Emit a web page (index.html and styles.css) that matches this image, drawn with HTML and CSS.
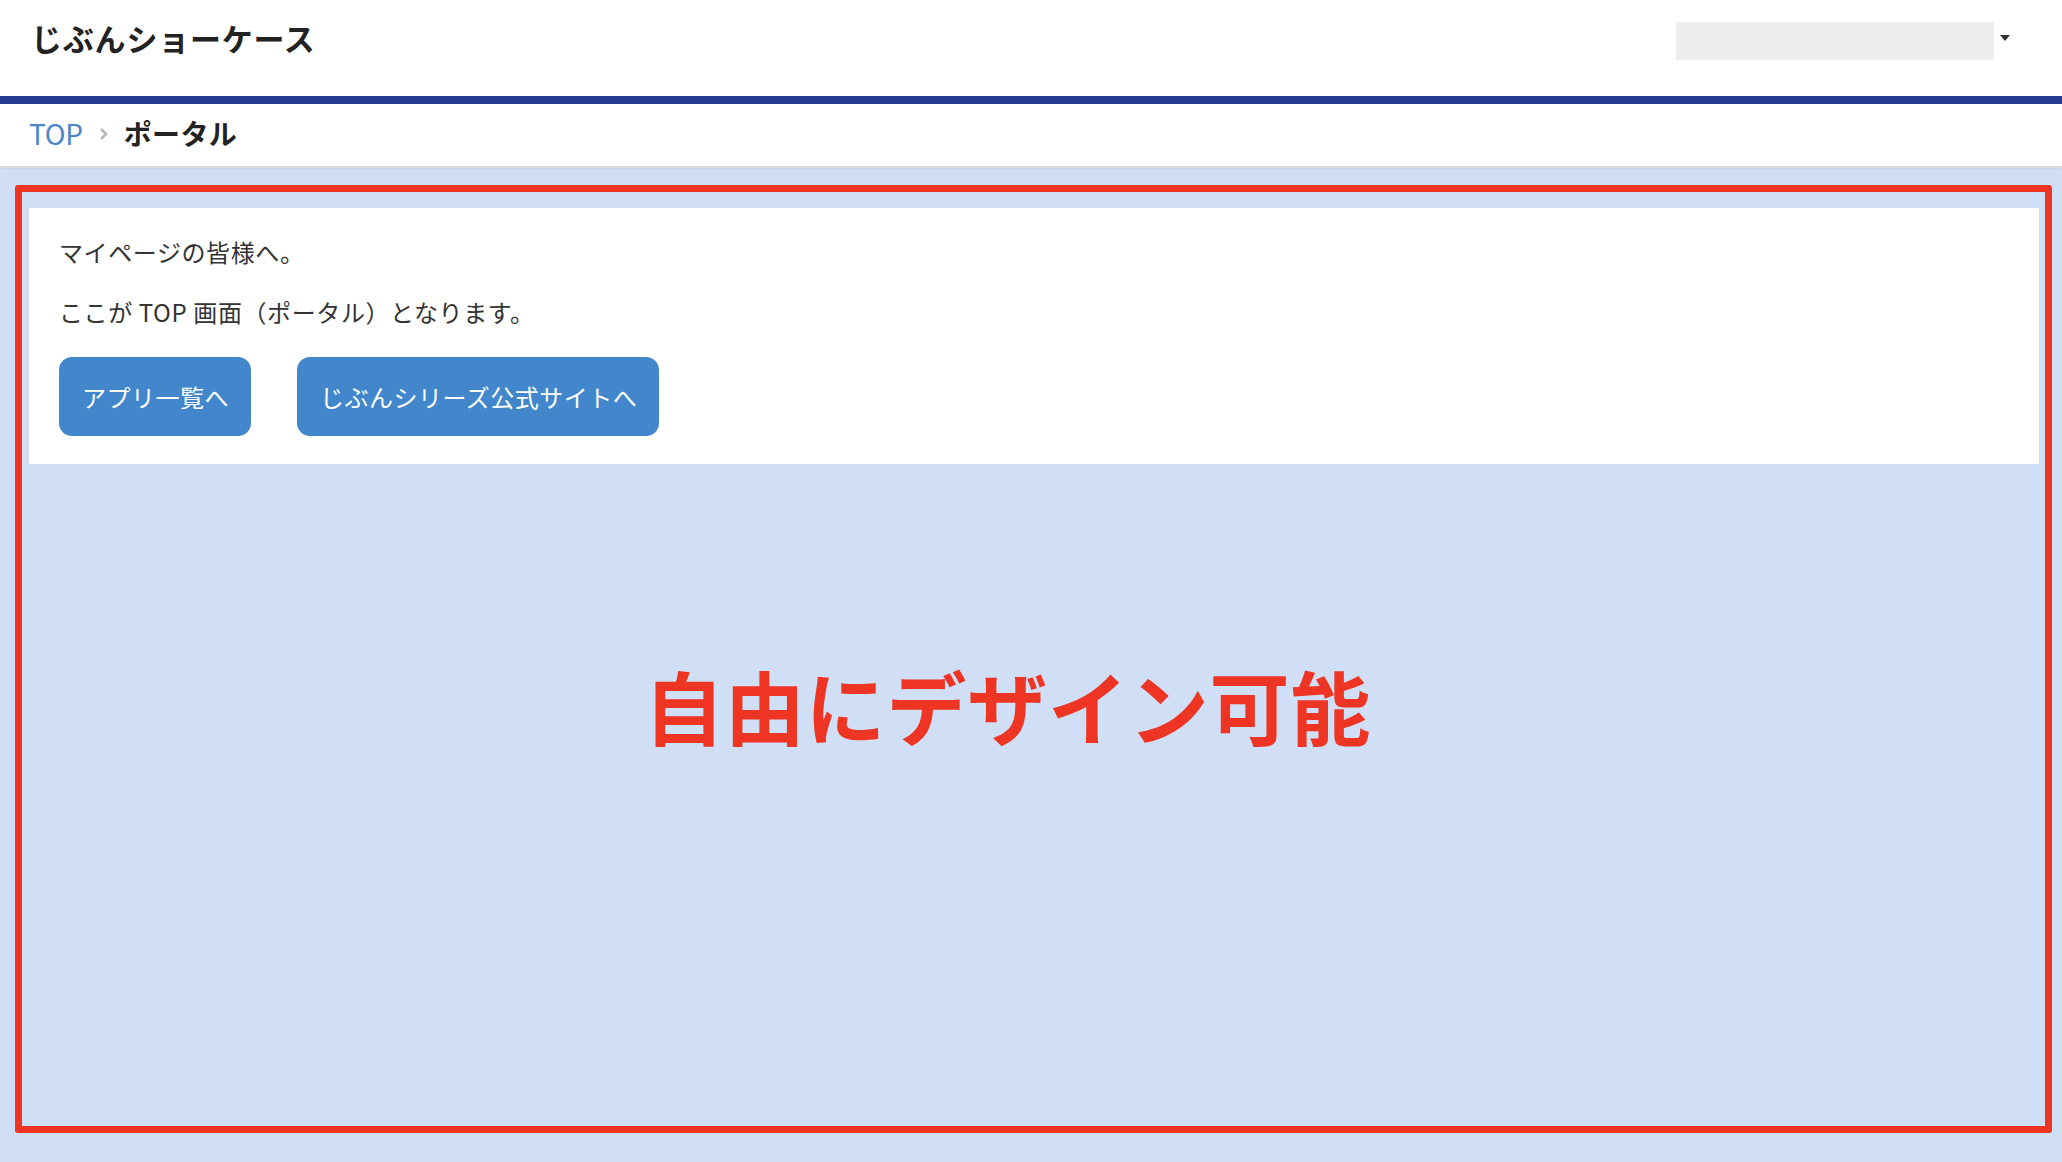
FILE: index.html
```html
<!DOCTYPE html>
<html lang="ja">
<head>
    <meta charset="UTF-8">
    <meta name="viewport" content="width=device-width, initial-scale=1.0">
    <title>じぶんショーケース</title>
    <link rel="stylesheet" href="styles.css">
</head>
<body>
    <header class="site-header">
        <h1 class="site-title">じぶんショーケース</h1>
        <div class="account-select"></div>
        <span class="account-caret"></span>
    </header>

    <nav class="breadcrumb">
        <a href="#" class="crumb-link">TOP</a>
        <svg class="crumb-sep" width="9" height="14" viewBox="0 0 9 14">
            <path d="M2 2 L7 7 L2 12" fill="none" stroke="#b8b8b8" stroke-width="2.6"/>
        </svg>
        <span class="crumb-current">ポータル</span>
    </nav>

    <main class="portal">
        <section class="welcome-card">
            <p>マイページの皆様へ。</p>
            <p>ここが TOP 画面（ポータル）となります。</p>
            <div class="actions">
                <a href="#" class="btn">アプリ一覧へ</a>
                <a href="#" class="btn">じぶんシリーズ公式サイトへ</a>
            </div>
        </section>
    </main>

    <!-- annotation over the free area -->
    <div class="free-area">
        <span class="free-label">自由にデザイン可能</span>
    </div>
</body>
</html>
```

FILE: styles.css
```css
body {
    margin: 0;
    font-family: "Noto Sans CJK JP", "Noto Sans", sans-serif;
    background-color: #d0dff6;
    color: #333;
    min-height: 1162px;
    position: relative;
}
.site-header {
    display: flex;
    align-items: flex-start;
    height: 74px;
    padding: 22px 52px 0 31px;
    background: #fff;
    border-bottom: 8px solid #243a8f;
}
.site-title {
    margin: -3px 0 0;
    font-size: 31px;
    line-height: 38px;
    font-weight: bold;
    color: #222;
    letter-spacing: 0.8px;
}
.account-select {
    margin-left: auto;
    width: 318px;
    height: 38px;
    background: #ededed;
}
.account-caret {
    margin: 13px 0 0 6px;
    width: 0;
    height: 0;
    border-left: 5px solid transparent;
    border-right: 5px solid transparent;
    border-top: 6px solid #333;
}

.breadcrumb {
    display: flex;
    align-items: center;
    gap: 16px;
    height: 58px;
    padding: 0 0 4px 29px;
    background: #fff;
    border-bottom: 2px solid #dcdcdc;
    box-shadow: 0 1px 2px rgba(0, 0, 0, 0.06);
}
.crumb-link {
    font-size: 28px;
    color: #4a86c8;
    text-decoration: none;
    letter-spacing: -0.3px;
}
.crumb-sep {
    margin-top: 2px;
}
.crumb-current {
    font-size: 28px;
    font-weight: bold;
    color: #222;
    letter-spacing: 0.4px;
}

.portal {
    padding: 40px 23px 0 29px;
}
.welcome-card {
    background: #fff;
    padding: 26px 30px 28px;
    font-size: 24px;
    letter-spacing: 0.6px;
}
.welcome-card p {
    margin: 0;
    line-height: 36px;
}
.welcome-card p + p {
    margin-top: 24px;
}
.actions {
    display: flex;
    gap: 46px;
    margin-top: 27px;
    letter-spacing: 0.5px;
}
.btn {
    display: inline-flex;
    align-items: center;
    height: 79px;
    padding: 0 22px 0 23px;
    background-color: #4287cb;
    color: #fff;
    font-size: 24px;
    text-decoration: none;
    border-radius: 13px;
}

.free-area {
    position: absolute;
    left: 15px;
    top: 185px;
    width: 2023px;
    height: 934px;
    border: 7px solid #ee3524;
    border-radius: 3px;
    pointer-events: none;
}
.free-label {
    position: absolute;
    left: 622px;
    top: 472px;
    font-size: 80px;
    line-height: 1;
    font-weight: bold;
    color: #ee3524;
    letter-spacing: 0.8px;
    white-space: nowrap;
}
```
